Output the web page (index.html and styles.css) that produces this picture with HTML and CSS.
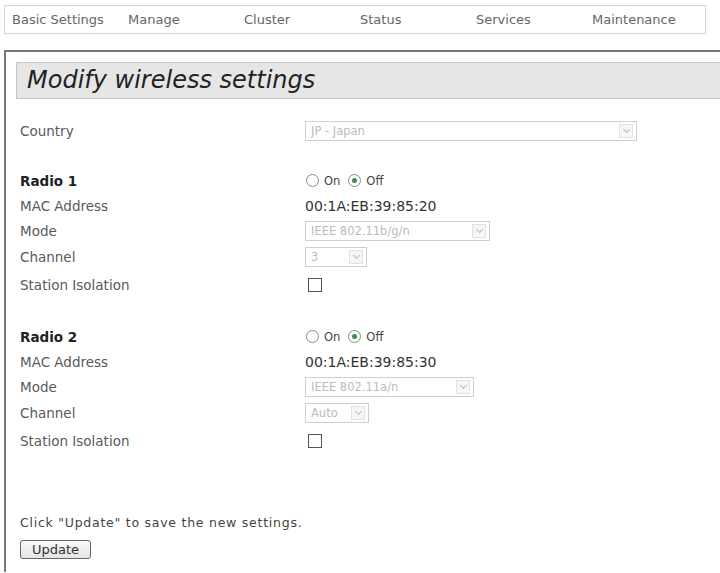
FILE: index.html
```html
<!DOCTYPE html>
<html lang="en">
<head>
    <meta charset="UTF-8">
    <title>Modify wireless settings</title>
    <link rel="stylesheet" href="styles.css">
</head>
<body>
    <div class="nav">
        <span>Basic Settings</span>
        <span>Manage</span>
        <span>Cluster</span>
        <span>Status</span>
        <span>Services</span>
        <span>Maintenance</span>
    </div>

    <div class="frame">
        <h1 class="heading">Modify wireless settings</h1>

        <div class="form">
            <div class="row">
                <div class="label">Country</div>
                <div class="select country">JP - Japan<span class="arrow"></span></div>
            </div>

            <div class="section">
                <div class="row short">
                    <div class="label radio-title">Radio 1</div>
                    <div class="radios">
                        <span class="radio"></span><span class="opt">On</span>
                        <span class="radio checked"></span><span class="opt">Off</span>
                    </div>
                </div>
                <div class="row short">
                    <div class="label">MAC Address</div>
                    <div class="value">00:1A:EB:39:85:20</div>
                </div>
                <div class="row">
                    <div class="label">Mode</div>
                    <div class="select mode1">IEEE 802.11b/g/n<span class="arrow"></span></div>
                </div>
                <div class="row">
                    <div class="label">Channel</div>
                    <div class="select chan1">3<span class="arrow"></span></div>
                </div>
                <div class="row tall">
                    <div class="label">Station Isolation</div>
                    <span class="checkbox"></span>
                </div>
            </div>

            <div class="section">
                <div class="row short">
                    <div class="label radio-title">Radio 2</div>
                    <div class="radios">
                        <span class="radio"></span><span class="opt">On</span>
                        <span class="radio checked"></span><span class="opt">Off</span>
                    </div>
                </div>
                <div class="row short">
                    <div class="label">MAC Address</div>
                    <div class="value">00:1A:EB:39:85:30</div>
                </div>
                <div class="row">
                    <div class="label">Mode</div>
                    <div class="select mode2">IEEE 802.11a/n<span class="arrow"></span></div>
                </div>
                <div class="row">
                    <div class="label">Channel</div>
                    <div class="select chan2">Auto<span class="arrow"></span></div>
                </div>
                <div class="row tall">
                    <div class="label">Station Isolation</div>
                    <span class="checkbox"></span>
                </div>
            </div>

            <p class="hint">Click "Update" to save the new settings.</p>
            <button class="update">Update</button>
        </div>
    </div>
</body>
</html>
```

FILE: styles.css
```css
html, body {
    margin: 0;
    overflow: hidden;
}
body {
    font-family: "DejaVu Sans", Verdana, sans-serif;
    background: #ffffff;
    color: #555;
}
.nav {
    margin: 5px 0 0 4px;
    width: 693px;
    height: 27px;
    padding-left: 7px;
    border: 1px solid #d4d4d4;
    display: grid;
    grid-template-columns: repeat(6, 116px);
    align-items: center;
    font-size: 13px;
    color: #666;
}
.frame {
    margin: 16px -20px 0 4px;
    border: 2px solid #777;
    border-bottom: none;
    padding: 10px 0 0 10px;
    height: 510px;
}
.heading {
    margin: 0;
    height: 35px;
    line-height: 35px;
    padding-left: 10px;
    background: #e6e6e6;
    border: 1px solid #c6c6c6;
    font-size: 24px;
    font-style: italic;
    font-weight: normal;
    color: #222;
}
.form {
    padding: 19px 0 0 4px;
    font-size: 13.5px;
}
.row {
    display: flex;
    align-items: center;
    height: 26px;
}
.row.short {
    height: 25px;
}
.row.tall {
    height: 30px;
}
.section {
    margin-top: 24px;
}
.label {
    width: 285px;
    color: #5a5a5a;
}
.radio-title {
    font-weight: bold;
    color: #222;
}
.value {
    font-size: 14px;
    color: #333;
}
.select {
    position: relative;
    box-sizing: border-box;
    height: 20px;
    line-height: 18px;
    padding-left: 5px;
    border: 1px solid #cfcfcf;
    font-size: 11.5px;
    color: #bcbcbc;
    background: #fff;
}
.arrow {
    position: absolute;
    right: 3px;
    top: 2px;
    width: 14px;
    height: 14px;
    box-sizing: border-box;
    border: 1px solid #e2e2e2;
    background: #f6f6f6;
}
.arrow::after {
    content: "";
    position: absolute;
    left: 4px;
    top: 2px;
    width: 4px;
    height: 4px;
    border-right: 1px solid #bbb;
    border-bottom: 1px solid #bbb;
    transform: rotate(45deg);
}
.country { width: 332px; }
.mode1 { width: 185px; }
.mode2 { width: 169px; }
.chan1 { width: 62px; }
.chan2 { width: 64px; }
.radios {
    display: flex;
    align-items: center;
    font-size: 11.5px;
    color: #444;
}
.radio {
    width: 11px;
    height: 11px;
    border: 1px solid #888;
    border-radius: 50%;
    position: relative;
    margin: 0 5px 0 1px;
}
.radio.checked {
    border-color: #6a9a7a;
    margin-left: 8px;
}
.radio.checked::after {
    content: "";
    position: absolute;
    left: 3px;
    top: 3px;
    width: 5px;
    height: 5px;
    border-radius: 50%;
    background: #3f8a55;
}
.checkbox {
    width: 12px;
    height: 12px;
    margin-left: 3px;
    border: 1px solid #555;
}
.hint {
    margin: 58px 0 0;
    line-height: 18px;
    font-size: 12.5px;
    letter-spacing: 0.75px;
    color: #444;
}
.update {
    margin-top: 8px;
    height: 19px;
    width: 71px;
    padding: 0;
    font-family: "DejaVu Sans", Verdana, sans-serif;
    font-size: 13px;
    color: #333;
    background: linear-gradient(to bottom, #fafafa, #e4e4e4);
    border: 1px solid #666;
    border-radius: 3px;
}
```
